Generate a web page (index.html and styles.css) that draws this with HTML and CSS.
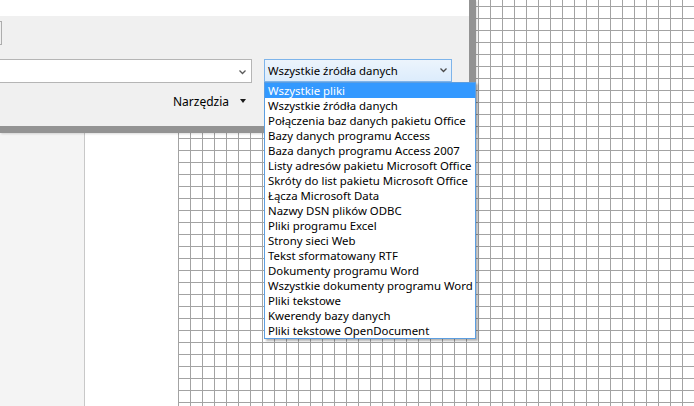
FILE: index.html
```html
<!DOCTYPE html>
<html lang="pl">
<head>
<meta charset="utf-8">
<title>Źródła danych</title>
<link rel="stylesheet" href="styles.css">
</head>
<body>
<div class="screen">
  <div class="nav"></div>
  <div class="blank"></div>
  <div class="canvas"></div>

  <div class="dialog">
    <div class="topgap"></div>
    <div class="row1"><div class="stub"></div></div>
    <div class="row2">
      <div class="combo-left">
        <svg class="chev" width="7" height="5" viewBox="0 0 7 5"><path d="M0.5 0.5 L3.5 3.5 L6.5 0.5" fill="none" stroke="#5a5a5a" stroke-width="1.3"/></svg>
      </div>
      <div class="combo-wrap">
        <div class="combo-sel">
          <span class="combo-text">Wszystkie źródła danych</span>
          <svg class="chev" width="7" height="5" viewBox="0 0 7 5"><path d="M0.5 0.5 L3.5 3.5 L6.5 0.5" fill="none" stroke="#4a4a4a" stroke-width="1.3"/></svg>
        </div>
        <ul class="droplist">
          <li class="active">Wszystkie pliki</li>
          <li>Wszystkie źródła danych</li>
          <li>Połączenia baz danych pakietu Office</li>
          <li>Bazy danych programu Access</li>
          <li>Baza danych programu Access 2007</li>
          <li>Listy adresów pakietu Microsoft Office</li>
          <li>Skróty do list pakietu Microsoft Office</li>
          <li>Łącza Microsoft Data</li>
          <li>Nazwy DSN plików ODBC</li>
          <li>Pliki programu Excel</li>
          <li>Strony sieci Web</li>
          <li>Tekst sformatowany RTF</li>
          <li>Dokumenty programu Word</li>
          <li>Wszystkie dokumenty programu Word</li>
          <li>Pliki tekstowe</li>
          <li>Kwerendy bazy danych</li>
          <li>Pliki tekstowe OpenDocument</li>
        </ul>
      </div>
    </div>
    <div class="row3">
      <span class="tools">Narzędzia</span>
      <span class="tri"></span>
    </div>
  </div>
</div>
</body>
</html>
```
FILE: styles.css
```css
html, body {
  margin: 0;
  padding: 0;
  background: #ffffff;
}
body {
  font-family: "Noto Sans", "Open Sans", sans-serif;
  font-size: 11.4px;
  color: #000;
}
.screen {
  position: relative;
  width: 694px;
  height: 406px;
  overflow: hidden;
  display: flex;
}
.nav {
  width: 84px;
  background: #f4f4f4;
  border-right: 1px solid #c8c8c8;
}
.blank {
  width: 93px;
  background: #ffffff;
}
.canvas {
  flex: 1;
  background-color: #ffffff;
  background-image:
    linear-gradient(to right, #a3a3a3 1px, transparent 1px),
    linear-gradient(to bottom, #a3a3a3 1px, transparent 1px);
  background-size: 12px 12px;
  background-position: 0 6px;
}
.dialog {
  position: absolute;
  left: 0;
  top: 0;
  width: 469px;
  height: 126px;
  background: #f0f0f0;
  border-right: 7px solid #939393;
  border-bottom: 7px solid #939393;
  display: flex;
  flex-direction: column;
  box-shadow: 1px 1px 2px rgba(0,0,0,0.15);
}
.topgap {
  height: 16px;
  background: #ffffff;
}
.row1 {
  height: 43px;
  padding-top: 5px;
  box-sizing: border-box;
}
.stub {
  width: 1px;
  height: 22px;
  border: 1px solid #adadad;
  border-left: none;
}
.row2 {
  height: 24px;
  display: flex;
  align-items: flex-start;
}
.combo-left {
  width: 252px;
  height: 24px;
  box-sizing: border-box;
  background: #ffffff;
  border: 1px solid #b5b5b5;
  border-left: none;
  display: flex;
  align-items: center;
  justify-content: flex-end;
  padding-right: 5px;
  padding-top: 2px;
}
.combo-wrap {
  position: relative;
  margin-left: 12px;
  width: 188px;
  height: 23px;
}
.combo-sel {
  height: 23px;
  box-sizing: border-box;
  border: 1px solid #7eb4ea;
  background: linear-gradient(to bottom, #ecf4fc, #dcecfc);
  display: flex;
  align-items: center;
  justify-content: space-between;
  padding: 0 4px 0 3px;
}
.combo-text {
  line-height: 15px;
}
.droplist {
  position: absolute;
  left: 0;
  top: 23px;
  width: 212px;
  margin: 0;
  padding: 0;
  list-style: none;
  background: #ffffff;
  border: 1px solid #5c9ee0;
  box-sizing: border-box;
  box-shadow: 2px 2px 2px rgba(0,0,0,0.3);
}
.droplist li {
  height: 15px;
  line-height: 15px;
  padding-left: 3px;
  white-space: nowrap;
}
.droplist li.active {
  background: #3399ff;
  color: #ffffff;
}
.row3 {
  height: 43px;
  display: flex;
  align-items: center;
  padding-left: 173px;
  padding-bottom: 7px;
  box-sizing: border-box;
}
.tools {
  width: 67px;
  line-height: 15px;
  font-size: 12px;
}
.tri {
  width: 0;
  height: 0;
  border-left: 3.5px solid transparent;
  border-right: 3.5px solid transparent;
  border-top: 4px solid #1a1a1a;
}
```
